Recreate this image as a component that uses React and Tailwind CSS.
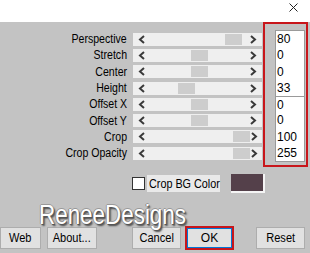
const sliders = [
  { label: 'Perspective', thumb: 92, value: '80' },
  { label: 'Stretch', thumb: 58, value: '0' },
  { label: 'Center', thumb: 58, value: '0' },
  { label: 'Height', thumb: 45, value: '33' },
  { label: 'Offset X', thumb: 58, value: '0' },
  { label: 'Offset Y', thumb: 58, value: '0' },
  { label: 'Crop', thumb: 100, value: '100' },
  { label: 'Crop Opacity', thumb: 100, value: '255' },
];

function Chevron({ dir }) {
  const d = dir === 'left' ? 'M6 1 L2 4.5 L6 8' : 'M2 1 L6 4.5 L2 8';
  return (
    <svg width="8" height="9" viewBox="0 0 8 9" className="shrink-0">
      <path d={d} fill="none" stroke="#3a3a3a" strokeWidth="2" />
    </svg>
  );
}

function SliderRow({ label, thumb }) {
  return (
    <div className="flex items-center h-[16.3px]">
      <div className="w-[127px] text-right text-[12px] leading-none text-black whitespace-nowrap">
        <span className="inline-block scale-x-[0.88] origin-right">{label}</span>
      </div>
      <div className="ml-[6px] w-[129px] h-[13px] bg-[#efefef] flex items-center px-[5px]">
        <Chevron dir="left" />
        <div className="flex-1 h-[11px] flex items-center">
          <div className="w-[17px] h-[11px] bg-[#cdcdcd]" style={{ marginLeft: thumb - 13 }} />
        </div>
        <Chevron dir="right" />
      </div>
    </div>
  );
}

function Button({ children, className = '' }) {
  return (
    <div className={`h-[22px] bg-[#e1e1e1] border border-[#adadad] flex items-center justify-center text-[12px] text-black ${className}`}>
      <span className="inline-block scale-x-[0.92]">{children}</span>
    </div>
  );
}

export default function App() {
  return (
    <div className="w-[310px] h-[253px] bg-[#c3c3c3] flex flex-col overflow-hidden font-['Liberation_Sans',Arial,sans-serif]">
      {/* Title strip */}
      <div className="h-[22px] bg-white flex justify-end items-start pr-[12px] pt-[3px]">
        <svg width="9" height="9" viewBox="0 0 9 9">
          <path d="M0.5 0.5 L8.5 8.5 M8.5 0.5 L0.5 8.5" stroke="#222" strokeWidth="1" />
        </svg>
      </div>

      {/* Sliders + values */}
      <div className="flex h-[145px]">
        <div className="w-[263px] flex flex-col pt-[9px]">
          {sliders.map((s) => (
            <SliderRow key={s.label} label={s.label} thumb={s.thumb} />
          ))}
        </div>
        <div className="w-[45px] h-[145px] border-2 border-[#c8161b] pl-[10px] pt-[6px]">
          <div className="w-[30px] bg-white border border-[#9a9a9a] flex flex-col">
            {sliders.map((s, i) => (
              <div
                key={s.label}
                className={`h-[16.3px] pl-[1px] text-[12px] leading-[16px] text-black ${i === 4 ? 'border-t border-[#9a9a9a]' : ''}`}
              >
                {s.value}
              </div>
            ))}
          </div>
        </div>
      </div>

      {/* Crop BG color */}
      <div className="flex items-center mt-[7px] h-[19px]">
        <div className="ml-[132px] w-[13px] h-[13px] bg-white border border-[#333]" />
        <div className="ml-[2px] h-[17px] w-[73px] bg-[#e9e9e9] flex items-center pl-[2px] text-[12px] text-black whitespace-nowrap">
          <span className="inline-block scale-x-[0.9] origin-left">Crop BG Color</span>
        </div>
        <div className="ml-[11px] w-[34px] h-[19px] bg-[#54404a] border-r-2 border-b-2 border-[#f4f4f4]" />
      </div>

      {/* Watermark */}
      <div className="ml-[39px] mt-[9px] h-[26px] text-[27px] leading-[26px] text-white whitespace-nowrap [text-shadow:1px_1px_0_#555,-1px_0_0_#8a8a8a,0_-1px_0_#999,2px_2px_2px_#444]">
        <span className="inline-block scale-x-[0.83] origin-left">ReneeDesigns</span>
      </div>

      {/* Buttons */}
      <div className="flex items-center mt-[-3px]">
        <Button className="w-[41px]">Web</Button>
        <Button className="ml-[6px] w-[50px]">About...</Button>
        <Button className="ml-[35px] w-[49px]">Cancel</Button>
        <div className="ml-[4px] w-[49px] h-[24px] border-2 border-[#c8161b] mt-[1px]">
          <div className="w-full h-full bg-[#e1e1e1] border border-[#0078d7] flex items-center justify-center text-[12px] text-black">
            OK
          </div>
        </div>
        <Button className="ml-[22px] w-[49px]">Reset</Button>
      </div>
    </div>
  );
}
